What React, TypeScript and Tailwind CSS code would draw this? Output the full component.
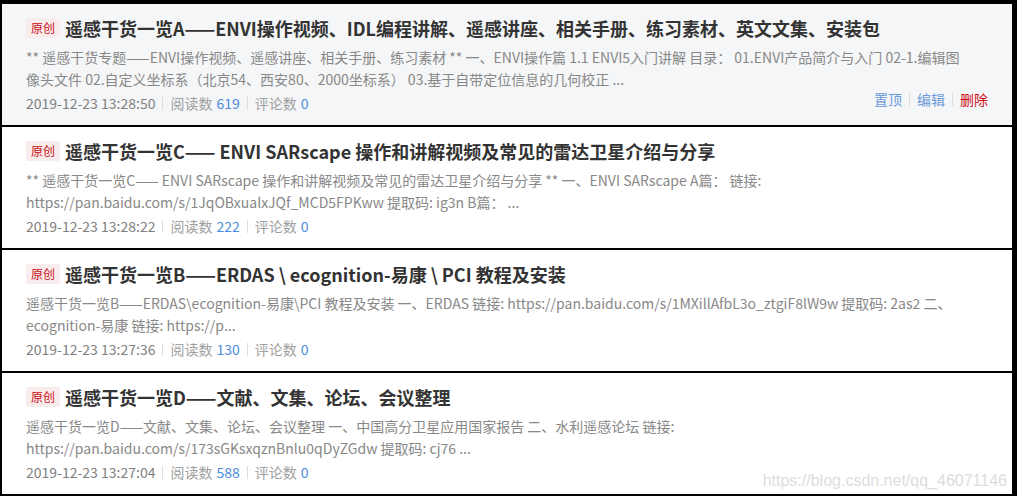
import React from "react";

type Article = {
  title: string;
  lines: string[];
  date: string;
  reads: number;
  comments: number;
  hovered?: boolean;
};

const articles: Article[] = [
  {
    title:
      "遥感干货一览A——ENVI操作视频、IDL编程讲解、遥感讲座、相关手册、练习素材、英文文集、安装包",
    lines: [
      "** 遥感干货专题——ENVI操作视频、遥感讲座、相关手册、练习素材 ** 一、ENVI操作篇 1.1 ENVI5入门讲解 目录： 01.ENVI产品简介与入门 02-1.编辑图",
      "像头文件 02.自定义坐标系（北京54、西安80、2000坐标系） 03.基于自带定位信息的几何校正 ...",
    ],
    date: "2019-12-23 13:28:50",
    reads: 619,
    comments: 0,
    hovered: true,
  },
  {
    title: "遥感干货一览C—— ENVI SARscape 操作和讲解视频及常见的雷达卫星介绍与分享",
    lines: [
      "** 遥感干货一览C—— ENVI SARscape 操作和讲解视频及常见的雷达卫星介绍与分享 ** 一、ENVI SARscape A篇： 链接:",
      "https://pan.baidu.com/s/1JqOBxualxJQf_MCD5FPKww 提取码: ig3n B篇： ...",
    ],
    date: "2019-12-23 13:28:22",
    reads: 222,
    comments: 0,
  },
  {
    title: "遥感干货一览B——ERDAS \\ ecognition-易康 \\ PCI 教程及安装",
    lines: [
      "遥感干货一览B——ERDAS\\ecognition-易康\\PCI 教程及安装 一、ERDAS 链接: https://pan.baidu.com/s/1MXillAfbL3o_ztgiF8lW9w 提取码: 2as2 二、",
      "ecognition-易康 链接: https://p...",
    ],
    date: "2019-12-23 13:27:36",
    reads: 130,
    comments: 0,
  },
  {
    title: "遥感干货一览D——文献、文集、论坛、会议整理",
    lines: [
      "遥感干货一览D——文献、文集、论坛、会议整理 一、中国高分卫星应用国家报告 二、水利遥感论坛 链接:",
      "https://pan.baidu.com/s/173sGKsxqznBnlu0qDyZGdw 提取码: cj76 ...",
    ],
    date: "2019-12-23 13:27:04",
    reads: 588,
    comments: 0,
  },
];

const font = {
  fontFamily: '"Microsoft YaHei", "Noto Sans CJK SC", "Noto Sans", sans-serif',
};

function Divider() {
  return <span className="mx-[7px] inline-block h-[13px] w-px bg-[#dddddd] align-[-1px]" />;
}

function ArticleRow({ a }: { a: Article }) {
  return (
    <div
      className={`flex h-[121px] flex-col pl-[24px] pr-[24px] pt-[12px] ${
        a.hovered ? "bg-[#f5f6f7]" : "bg-white"
      }`}
    >
      <div className="flex h-[24px] items-center">
        <span className="mr-[5px] inline-flex h-[20px] w-[34px] items-center justify-center rounded-[2px] bg-[#f9ecec] text-[12px] leading-none text-[#ca0c16]">
          原创
        </span>
        <span className="whitespace-nowrap text-[18px] font-bold leading-[24px] text-[#333333]">
          {a.title}
        </span>
      </div>
      <div className="mt-[6px] text-[14px] leading-[22px] text-[#888888]">
        {a.lines.map((l, i) => (
          <div key={i} className="whitespace-nowrap">
            {l}
          </div>
        ))}
      </div>
      <div className="mt-[2px] flex h-[22px] items-center text-[14px] leading-[22px]">
        <span className="text-[#808080]">{a.date}</span>
        <Divider />
        <span className="text-[#a0a0a0]">阅读数</span>
        <span className="ml-[4px] text-[#4a8de0]">{a.reads}</span>
        <Divider />
        <span className="text-[#a0a0a0]">评论数</span>
        <span className="ml-[4px] text-[#4a8de0]">{a.comments}</span>
        {a.hovered && (
          <div className="ml-auto -mt-[8px] flex items-center">
            <span className="text-[#6b9bd8]">置顶</span>
            <Divider />
            <span className="text-[#6b9bd8]">编辑</span>
            <Divider />
            <span className="text-[#ca0c16]">删除</span>
          </div>
        )}
      </div>
    </div>
  );
}

export default function App() {
  return (
    <div className="relative h-[500px] w-[1017px] overflow-hidden bg-white" style={font}>
      <div className="flex h-[496px] flex-col gap-[2px] bg-black pb-[2px] pl-[2px] pr-[5px] pt-[4px]">
        {articles.map((a) => (
          <ArticleRow key={a.date} a={a} />
        ))}
      </div>
      <div
        className="absolute right-[10px] top-[469px] text-[16px] text-[#dddddd]"
        style={{ fontFamily: '"Liberation Sans", Arial, sans-serif' }}
      >
        https://blog.csdn.net/qq_46071146
      </div>
    </div>
  );
}
